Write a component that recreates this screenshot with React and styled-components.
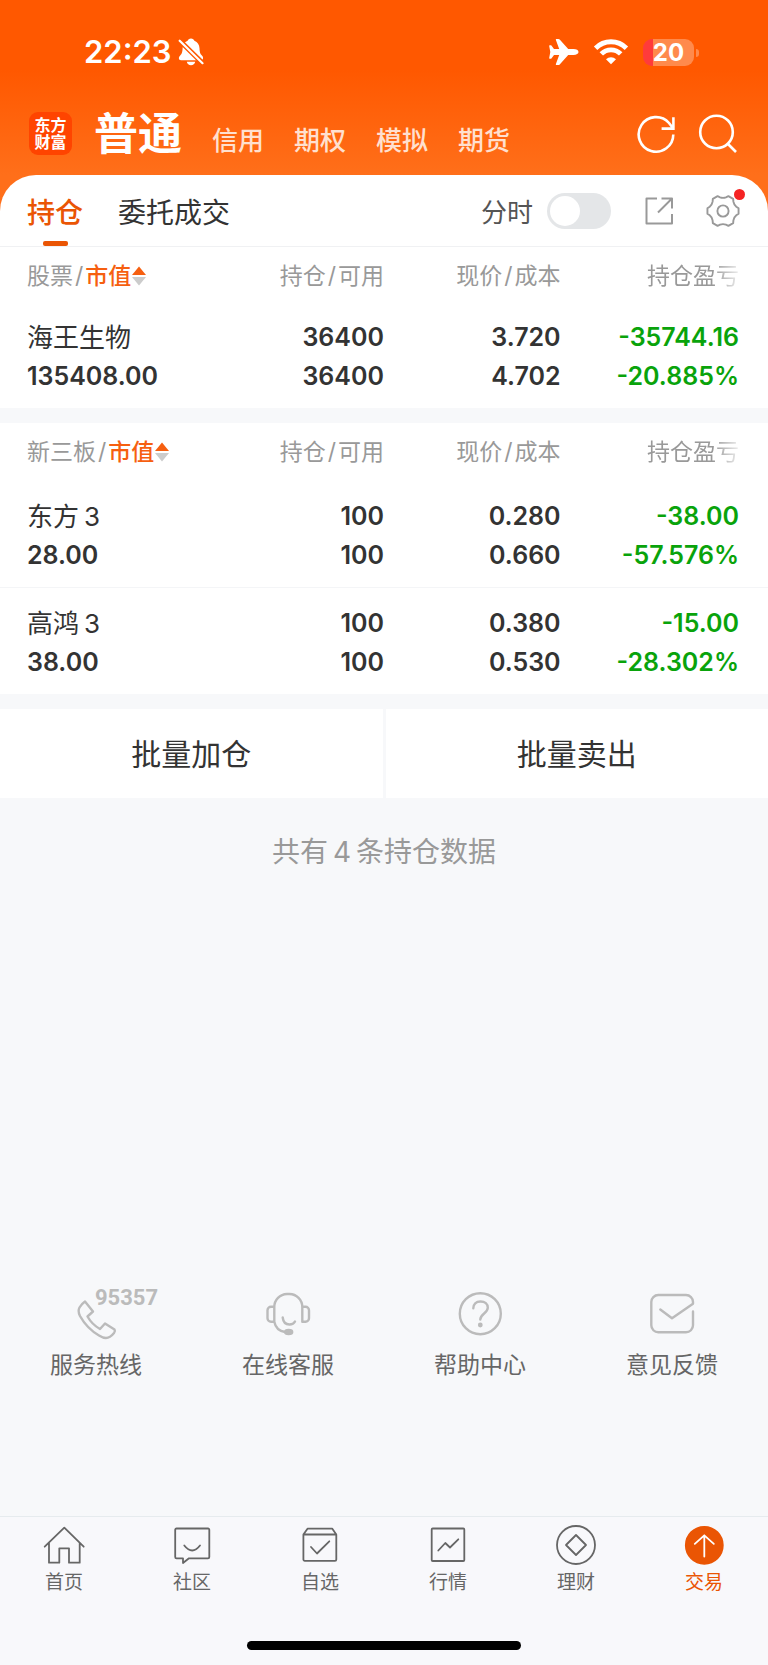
import React, { useState } from "react";
import styled, { createGlobalStyle } from "styled-components";

const GlobalStyle = createGlobalStyle`
  * { box-sizing: border-box; }
  body {
    margin: 0;
    background: #f7f8fa;
    color: #333;
    font-family: Inter, "Noto Sans CJK SC", sans-serif;
  }
  button { border: 0; padding: 0; background: none; font: inherit; color: inherit; cursor: pointer; }
  a { color: inherit; text-decoration: none; }
  svg { display: block; flex: none; }
`;

const Page = styled.div`
  min-height: 100vh;
  display: flex;
  flex-direction: column;
`;

const Hero = styled.header`
  background: linear-gradient(#ff5800 70px, #ff6f1a 175px);
`;

const StatusBar = styled.div`
  height: 104px;
  padding: 0 74px 0 84px;
  display: flex;
  align-items: center;
  justify-content: space-between;
  color: #fff;
`;

const StatusGroup = styled.div`
  display: flex;
  align-items: center;
  gap: ${(p) => p.$gap}px;
`;

const Clock = styled.time`
  font-size: 31px;
  font-weight: 600;
  line-height: 40px;
`;

const Battery = styled.div`
  position: relative;
  width: 51px;
  height: 27px;
  border-radius: 9px;
  background: linear-gradient(to right, #ff3b3b 10px, #ff8a4c 10px);
  font-size: 24px;
  font-weight: 700;
  line-height: 27px;
  text-align: center;
  &::after {
    content: "";
    position: absolute;
    right: -5px;
    top: 10px;
    width: 3px;
    height: 8px;
    border-radius: 0 3px 3px 0;
    background: #ff8a4c;
  }
`;

const AccountBar = styled.div`
  height: 71px;
  padding: 0 30px 12px 29px;
  display: flex;
  align-items: center;
  color: #fff;
`;

const Logo = styled.div`
  width: 43px;
  height: 43px;
  border-radius: 9px;
  background: #ff4400;
  display: flex;
  flex-direction: column;
  align-items: center;
  justify-content: center;
  font-size: 16px;
  font-weight: 700;
  line-height: 17px;
`;

const AccountTabs = styled.nav`
  flex: 1;
  margin: 8px 0 0 22px;
  display: flex;
  align-items: baseline;
  gap: 30px;
`;

const AccountTab = styled.button`
  font-size: ${(p) => (p.$active ? 44 : 26)}px;
  font-weight: ${(p) => (p.$active ? 700 : 500)};
  line-height: 58px;
  color: ${(p) => (p.$active ? "#fff" : "#ffe0cf")};
`;

const HeaderActions = styled.div`
  display: flex;
  gap: 22px;
`;

const ViewBar = styled.div`
  height: 72px;
  padding: 0 28px 0 27px;
  display: flex;
  align-items: center;
  background: #fff;
  border-bottom: 1px solid #f0f1f3;
  border-radius: 36px 36px 0 0;
`;

const ViewTab = styled.button`
  position: relative;
  height: 71px;
  margin-right: 35px;
  font-size: 28px;
  font-weight: ${(p) => (p.$active ? 500 : 400)};
  color: ${(p) => (p.$active ? "#ea5504" : "#333")};
  &::after {
    content: "";
    display: ${(p) => (p.$active ? "block" : "none")};
    position: absolute;
    left: calc(50% - 12px);
    bottom: 0;
    width: 25px;
    height: 5px;
    border-radius: 2px;
    background: #ea5504;
  }
`;

const ViewTools = styled.div`
  margin-left: auto;
  display: flex;
  align-items: center;
`;

const SwitchLabel = styled.label`
  display: flex;
  align-items: center;
  gap: 14px;
  margin-right: 34px;
  font-size: 26px;
  color: #555;
`;

const Switch = styled.input`
  appearance: none;
  position: relative;
  width: 64px;
  height: 36px;
  margin: 0;
  border-radius: 18px;
  background: ${(p) => (p.checked ? "#ea5504" : "#e4e6e8")};
  cursor: pointer;
  &::after {
    content: "";
    position: absolute;
    top: 3px;
    left: ${(p) => (p.checked ? 31 : 3)}px;
    width: 30px;
    height: 30px;
    border-radius: 50%;
    background: #fff;
  }
`;

const ToolButton = styled.button`
  position: relative;
  color: #999;
  & + & { margin-left: 33px; }
`;

const Dot = styled.span`
  position: absolute;
  top: -5px;
  right: -5px;
  width: 11px;
  height: 11px;
  border-radius: 50%;
  background: #f52323;
`;

const Holdings = styled.section`
  background: #fff;
  & + & { margin-top: 15px; }
`;

const Table = styled.table`
  width: 100%;
  table-layout: fixed;
  border-collapse: collapse;
`;

const HeadCell = styled.th`
  width: ${(p) => p.$width}%;
  height: ${(p) => (p.$compact ? 54 : 57)}px;
  padding: 14px 0 0;
  vertical-align: top;
  text-align: right;
  font-size: 23px;
  font-weight: 400;
  line-height: 30px;
  color: #999;
  white-space: nowrap;
  &:first-child { padding-left: 27px; text-align: left; }
  &:last-child { padding-right: 29px; }
`;

const Slash = styled.span`
  margin: 0 2px;
`;

const SortButton = styled.button`
  display: inline-flex;
  align-items: center;
  gap: 1px;
  color: #f65f10;
  font-weight: 500;
  vertical-align: top;
`;

const Faded = styled.span`
  mask-image: linear-gradient(to right, #000 72%, transparent 106%);
`;

const Row = styled.tr`
  & + & { box-shadow: inset 0 1px 0 #f4f5f7; }
`;

const Cell = styled.td`
  height: 107px;
  padding: 17px 0 12px;
  text-align: right;
  font-size: 25px;
  font-weight: 600;
  color: ${(p) => (p.$loss ? "#09a30b" : "#333")};
  &:first-child { padding-left: 27px; text-align: left; }
  &:last-child { padding-right: 29px; }
`;

const Line = styled.div`
  height: 39px;
  line-height: 39px;
`;

const StockName = styled(Line)`
  font-size: 26px;
  font-weight: 400;
`;

const Digit = styled.span`
  margin: 0 ${(p) => (p.$end ? 0 : 5)}px 0 5px;
`;

const BatchBar = styled.div`
  margin-top: 15px;
  display: grid;
  grid-template-columns: 1fr 1fr;
  gap: 3px;
`;

const BatchButton = styled.button`
  height: 89px;
  padding-bottom: 3px;
  background: #fff;
  font-size: 30px;
`;

const Total = styled.p`
  margin: 33px 0 60px;
  text-align: center;
  font-size: 28px;
  line-height: 42px;
  color: #999;
`;

const HelpBar = styled.nav`
  margin: auto 0 136px;
  display: grid;
  grid-template-columns: repeat(4, 1fr);
`;

const HelpLink = styled.a`
  display: flex;
  flex-direction: column;
  align-items: center;
  gap: 9px;
  font-size: 23px;
  line-height: 30px;
  color: #666;
`;

const HelpIcon = styled.span`
  position: relative;
  color: #bbb;
`;

const Hotline = styled.span`
  position: absolute;
  left: 41px;
  top: 0;
  font-family: Roboto, sans-serif;
  font-size: 22px;
  font-weight: 700;
  line-height: 17px;
`;

const TabBar = styled.nav`
  padding-top: 6px;
  display: grid;
  grid-template-columns: repeat(6, 1fr);
  background: #f8f8fb;
  border-top: 1px solid #e6ebee;
`;

const TabLink = styled.a`
  display: flex;
  flex-direction: column;
  align-items: center;
  gap: 4px;
  font-size: 19px;
  line-height: 24px;
  color: ${(p) => (p.$active ? "#ea5504" : "#666")};
`;

const HomeArea = styled.div`
  padding: 46px 0 15px;
  background: #f8f8fb;
`;

const HomeIndicator = styled.div`
  width: 274px;
  height: 9px;
  margin: 0 auto;
  border-radius: 5px;
  background: #000;
`;

const Stroke = ({ w, h, sw, children, ...rest }) => (
  <svg width={w} height={h} viewBox={`0 0 ${w} ${h}`} fill="none" stroke="currentColor"
    strokeWidth={sw} strokeLinecap="round" strokeLinejoin="round" aria-hidden="true" {...rest}>
    {children}
  </svg>
);

const BellOff = () => (
  <svg width="26" height="28" viewBox="0 0 26 28" fill="#fff" aria-hidden="true">
    <path d="M13 0.5c1.8 0 3 1 3.4 2.3 3.300 1.300 4.900 4 5.100 7.500.2 4 .6 5.400 2.400 7.300 1.100 1.200 1.300 2 1.100 3.200-.2 1-.8 1.400-2 1.400H3c-1.300 0-2-.6-2.100-1.600-.1-1.200.3-1.900 1.300-3 1.700-1.900 2.200-3.300 2.400-7.300C4.800 6.800 6.400 4.100 9.600 2.800 10 1.500 11.200.5 13 .5zM8.800 23.800h8.400c-.4 2.200-2.100 3.500-4.200 3.500s-3.800-1.300-4.200-3.500z" />
    <path d="M0.500 1.500 26 26.500" stroke="#ff5800" strokeWidth="5" />
    <path d="M1.700 2.700 24.500 25.200" stroke="#fff" strokeWidth="2.200" strokeLinecap="round" />
  </svg>
);

const Plane = () => (
  <svg width="30" height="28" viewBox="0 0 30 28" fill="#fff" aria-hidden="true">
    <path d="M29.500 14c0 1.700-2 2.900-5 2.900h-5.300L10.700 26.400c-.4.500-.8.700-1.400.7H7.500c-.6 0-.8-.5-.6-1.100l3.300-9.100H5l-2.400 3.300c-.3.400-.6.500-1 .5H.8c-.5 0-.7-.3-.6-.8L1.300 14 .2 8.100C.1 7.600.3 7.300.8 7.300h.8c.4 0 .7.100 1 .5L5 11.100h5.200L6.900 2C6.700 1.400 6.900.9 7.500.9h1.800c.6 0 1 .2 1.400.7l8.500 9.500h5.300c3 0 5 1.200 5 2.900z" />
  </svg>
);

const Wifi = () => (
  <svg width="36" height="26" viewBox="0 0 36 26" fill="none" stroke="#fff" strokeWidth="4.800" aria-hidden="true">
    <path d="M2.600 9.200a21.600 21.600 0 0 1 30.800 0M8.300 14.900a13.600 13.600 0 0 1 19.400 0" />
    <path d="M18 25.200l-5-5a7.200 7.200 0 0 1 10 0z" fill="#fff" stroke="none" />
  </svg>
);

const Refresh = () => (
  <Stroke w={40} h={40} sw={2.6} strokeLinecap="butt" strokeLinejoin="miter">
    <path d="M37.300 20.500A17.300 17.300 0 1 1 33 9l4.300 5.500M37.400 3.200V14.600H25.600" />
  </Stroke>
);

const Search = () => (
  <Stroke w={40} h={40} sw={2.6} strokeLinecap="butt">
    <circle cx="18.500" cy="18" r="16.300" />
    <path d="M29.500 29.500l8.500 8.500" />
  </Stroke>
);

const Share = () => (
  <Stroke w={28} h={28} sw={2} strokeLinecap="butt">
    <path d="M12 1.500H1.500v25H27V17M16.500 1.500H27V11.500M27 1.500 13 15.500" />
  </Stroke>
);

const polar = (deg, r) => {
  const a = (deg * Math.PI) / 180;
  return `${(17 + r * Math.cos(a)).toFixed(2)} ${(17 + r * Math.sin(a)).toFixed(2)}`;
};

const gearPath =
  [0, 60, 120, 180, 240, 300]
    .map((a, i) =>
      `${i ? "L" : "M"}${polar(a - 10, 15.8)}L${polar(a + 10, 15.8)}L${polar(a + 18, 14)}Q${polar(a + 30, 12.6)} ${polar(a + 42, 14)}`)
    .join("") + "Z";

const Gear = () => (
  <Stroke w={34} h={34} sw={1.9}>
    <path d={gearPath} />
    <circle cx="17" cy="17" r="5.600" />
  </Stroke>
);

const SortArrows = () => (
  <svg width="14" height="20" viewBox="0 0 14 20" aria-hidden="true">
    <path d="M7 .5 14 9H0z" fill="#f65f10" />
    <path d="M7 19.500 0 11h14z" fill="#ccc" />
  </svg>
);

const helpLinks = [
  {
    label: "服务热线",
    extra: "95357",
    icon: <path d="M31 12.500 39 22.500 33.500 27.500Q38 35.500 46 40L51 34.500 60.500 40.500Q61.500 42 60 44 56 49 52 49 49 49 45 46.500 33 39.500 26 27 23.500 22 25.500 18.500 27.500 15 31 12.500Z" />,
  },
  {
    label: "在线客服",
    icon: (
      <>
        <path d="M28.300 32.700V18A13 13 0 0 1 41 5h2.500A13 13 0 0 1 56.300 18V32.700M28.300 17.700H25a3.500 3.500 0 0 0-3.500 3.500v8a3.500 3.500 0 0 0 3.500 3.500h3.300M56.300 17.700h3.200a3.500 3.500 0 0 1 3.500 3.500v8a3.500 3.500 0 0 1-3.500 3.500h-3.200M28.300 32.700Q30 41.500 39 43M36.700 28.500Q37.500 35.500 43.500 35.500 47.500 35.500 49 32.500" />
        <ellipse cx="42.700" cy="43" rx="3.500" ry="2" fill="currentColor" />
      </>
    ),
  },
  {
    label: "帮助中心",
    icon: (
      <>
        <circle cx="42.300" cy="24.700" r="20.500" />
        <path d="M35.300 19.300C35.300 15 38 12.500 42.500 12.500S49.800 15 49.800 18.800C49.800 24 42.300 25 42.300 30.500" />
        <circle cx="42.300" cy="36" r="1.200" fill="currentColor" />
      </>
    ),
  },
  {
    label: "意见反馈",
    icon: <path d="M30.300 20.500 42 29.300 63 14.700V13a7 7 0 0 0-7-7H28.300a7 7 0 0 0-7 7V36.300a7 7 0 0 0 7 7H56a7 7 0 0 0 7-7V22.500" />,
  },
];

const tabs = [
  { label: "首页", icon: <path d="M2.700 23.700 22.300 4.700 41.700 23.700M7 19.700V39.700H17.300V25.300H27V39.700H37.700V19.700" /> },
  { label: "社区", icon: <path d="M6.500 5.500H38a1.300 1.300 0 0 1 1.300 1.300V34a1.300 1.300 0 0 1-1.300 1.300H19L13 40V35.300H6.500A1.300 1.300 0 0 1 5.200 34V6.800A1.300 1.300 0 0 1 6.500 5.500ZM14.300 22.500Q22.200 32.500 30 22.500" /> },
  { label: "自选", icon: <path d="M5.400 11.500H38.300V36.500a1.300 1.300 0 0 1-1.300 1.300H6.700a1.300 1.300 0 0 1-1.300-1.300ZM5.400 11.500 9.500 5.700H34.300L38.300 11.500M13 24 19 30.500 31.300 18.300" /> },
  { label: "行情", icon: <><rect x="5.700" y="5.500" width="32.600" height="32.500" rx="1" /><path d="M12.300 27.500 19.300 20 24 24.500 32.300 16.300" /></> },
  { label: "理财", icon: <><circle cx="22" cy="22" r="19" /><path d="M22 12 32 22 22 32 12 22Z" /></> },
  { label: "交易", active: true, icon: <><circle cx="22.300" cy="22.300" r="18.500" fill="#ea5504" /><path d="M22.300 12.500V33.500M12.800 20.800 22.300 12.300 31.800 20.800" stroke="#fff" /></> },
];

const stocks = [
  { name: "海王生物", value: "135408.00", held: "36400", free: "36400", price: "3.720", cost: "4.702", gain: "-35744.16", rate: "-20.885%" },
];

const neeq = [
  { name: "东方", suffix: "3", value: "28.00", held: "100", free: "100", price: "0.280", cost: "0.660", gain: "-38.00", rate: "-57.576%" },
  { name: "高鸿", suffix: "3", value: "38.00", held: "100", free: "100", price: "0.380", cost: "0.530", gain: "-15.00", rate: "-28.302%" },
];

function HoldingTable({ market, rows, compact }) {
  return (
    <Holdings>
      <Table>
        <thead>
          <tr>
            <HeadCell scope="col" $width={27} $compact={compact}>
              {market}<Slash>/</Slash>
              <SortButton type="button">市值<SortArrows /></SortButton>
            </HeadCell>
            <HeadCell scope="col" $width={23} $compact={compact}>持仓<Slash>/</Slash>可用</HeadCell>
            <HeadCell scope="col" $width={23} $compact={compact}>现价<Slash>/</Slash>成本</HeadCell>
            <HeadCell scope="col" $width={27} $compact={compact}><Faded>持仓盈亏</Faded></HeadCell>
          </tr>
        </thead>
        <tbody>
          {rows.map((r) => (
            <Row key={r.name}>
              <Cell>
                <StockName>{r.name}{r.suffix && <Digit $end>{r.suffix}</Digit>}</StockName>
                <Line>{r.value}</Line>
              </Cell>
              <Cell><Line>{r.held}</Line><Line>{r.free}</Line></Cell>
              <Cell><Line>{r.price}</Line><Line>{r.cost}</Line></Cell>
              <Cell $loss><Line>{r.gain}</Line><Line>{r.rate}</Line></Cell>
            </Row>
          ))}
        </tbody>
      </Table>
    </Holdings>
  );
}

export default function App() {
  const [intraday, setIntraday] = useState(false);
  return (
    <Page>
      <GlobalStyle />
      <Hero>
        <StatusBar>
          <StatusGroup $gap={6}><Clock>22:23</Clock><BellOff /></StatusGroup>
          <StatusGroup $gap={14}>
            <Plane /><Wifi /><Battery>20</Battery>
          </StatusGroup>
        </StatusBar>
        <AccountBar>
          <Logo><span>东方</span><span>财富</span></Logo>
          <AccountTabs>
            <AccountTab type="button" $active>普通</AccountTab>
            <AccountTab type="button">信用</AccountTab>
            <AccountTab type="button">期权</AccountTab>
            <AccountTab type="button">模拟</AccountTab>
            <AccountTab type="button">期货</AccountTab>
          </AccountTabs>
          <HeaderActions>
            <button type="button" aria-label="刷新"><Refresh /></button>
            <button type="button" aria-label="搜索"><Search /></button>
          </HeaderActions>
        </AccountBar>
        <ViewBar>
          <ViewTab type="button" $active>持仓</ViewTab>
          <ViewTab type="button">委托成交</ViewTab>
          <ViewTools>
            <SwitchLabel>
              分时
              <Switch type="checkbox" role="switch" checked={intraday} onChange={(e) => setIntraday(e.target.checked)} />
            </SwitchLabel>
            <ToolButton type="button" aria-label="分享"><Share /></ToolButton>
            <ToolButton type="button" aria-label="设置"><Gear /><Dot /></ToolButton>
          </ViewTools>
        </ViewBar>
      </Hero>
      <main>
        <HoldingTable market="股票" rows={stocks} compact />
        <HoldingTable market="新三板" rows={neeq} />
        <BatchBar>
          <BatchButton type="button">批量加仓</BatchButton>
          <BatchButton type="button">批量卖出</BatchButton>
        </BatchBar>
        <Total>共有<Digit>4</Digit>条持仓数据</Total>
      </main>
      <HelpBar>
        {helpLinks.map((h) => (
          <HelpLink href="#" key={h.label}>
            <HelpIcon>
              <Stroke w={84} h={52} sw={2.4}>{h.icon}</Stroke>
              {h.extra && <Hotline>{h.extra}</Hotline>}
            </HelpIcon>
            {h.label}
          </HelpLink>
        ))}
      </HelpBar>
      <TabBar>
        {tabs.map((t) => (
          <TabLink href="#" key={t.label} $active={t.active}>
            <Stroke w={44} h={44} sw={1.8}>{t.icon}</Stroke>
            {t.label}
          </TabLink>
        ))}
      </TabBar>
      <HomeArea><HomeIndicator /></HomeArea>
    </Page>
  );
}
